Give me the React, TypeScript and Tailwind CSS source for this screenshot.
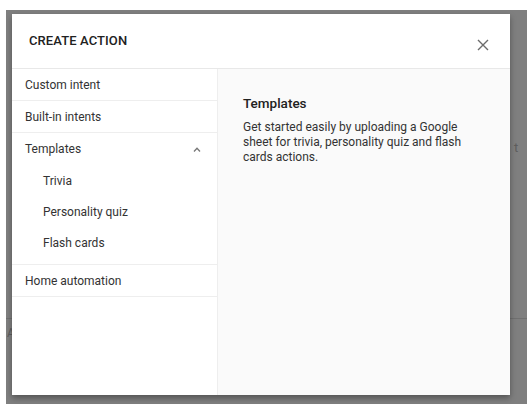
import React from "react";

const font = { fontFamily: "Roboto, 'Noto Sans', sans-serif" };

function Row({ children, indent = false, border = true, right }: { children: React.ReactNode; indent?: boolean; border?: boolean; right?: React.ReactNode }) {
  return (
    <div className={`flex items-center justify-between h-[31px] ${indent ? "pl-[31px]" : "pl-[13px]"} pr-[17px] ${border ? "border-b border-[#eeeeee]" : ""}`}>
      <span className="text-[12px] text-[#333333]">{children}</span>
      {right}
    </div>
  );
}

export default function App() {
  return (
    <div className="w-[527px] h-[409px] bg-white overflow-hidden" style={font}>
      <div className="relative ml-[6px] mt-[10px] h-[394px] bg-[#7f7f7f] pl-[6px] pt-[4px]">
        <div className="absolute left-0 right-0 top-[308px] h-px bg-[#707070]" />
        <span className="absolute left-[1px] top-[314px] text-[12px] text-[#5e5e5e]">A</span>
        <span className="absolute left-[508px] top-[128px] text-[13px] text-[#5e5e5e]">t</span>
        <div className="relative w-[498px] h-[381px] bg-white flex flex-col shadow-[0_3px_6px_rgba(0,0,0,0.35)]">
          <div className="h-[55px] flex items-center justify-between pl-[17px] pr-[21px] border-b border-[#e8e8e8] shrink-0">
            <span className="text-[13px] font-medium text-[#212121] tracking-[0.1px]">CREATE ACTION</span>
            <svg width="12" height="12" viewBox="0 0 12 12" className="mt-[8px]">
              <path d="M1 1 L11 11 M11 1 L1 11" stroke="#6b6b6b" strokeWidth="1.4" />
            </svg>
          </div>
          <div className="flex flex-1 min-h-0">
            <div className="w-[206px] border-r border-[#eeeeee] flex flex-col">
              <div className="h-[32px] flex items-center pl-[13px] border-b border-[#eeeeee]">
                <span className="text-[12px] text-[#333333]">Custom intent</span>
              </div>
              <div className="h-[32px] flex items-center pl-[13px] border-b border-[#eeeeee]">
                <span className="text-[12px] text-[#333333]">Built-in intents</span>
              </div>
              <div className="border-b border-[#eeeeee] pb-[6px]">
                <div className="h-[32px] flex items-center justify-between pl-[13px] pr-[16px]">
                  <span className="text-[12px] text-[#333333]">Templates</span>
                  <svg width="8" height="5" viewBox="0 0 8 5">
                    <path d="M1 4.5 L4 1.3 L7 4.5" fill="none" stroke="#777777" strokeWidth="1.3" />
                  </svg>
                </div>
                <Row indent border={false}>Trivia</Row>
                <Row indent border={false}>Personality quiz</Row>
                <Row indent border={false}>Flash cards</Row>
              </div>
              <div className="h-[32px] flex items-center pl-[13px] border-b border-[#eeeeee]">
                <span className="text-[12px] text-[#333333]">Home automation</span>
              </div>
            </div>
            <div className="flex-1 bg-[#fafafa] pl-[25px] pr-[20px] pt-[25px]">
              <div className="text-[13.5px] font-medium text-[#212121] leading-[18px]">Templates</div>
              <p className="mt-[8px] text-[12px] leading-[15px] text-[#333333] w-[225px]">
                Get started easily by uploading a Google sheet for trivia, personality quiz and flash cards actions.
              </p>
            </div>
          </div>
        </div>
      </div>
    </div>
  );
}
